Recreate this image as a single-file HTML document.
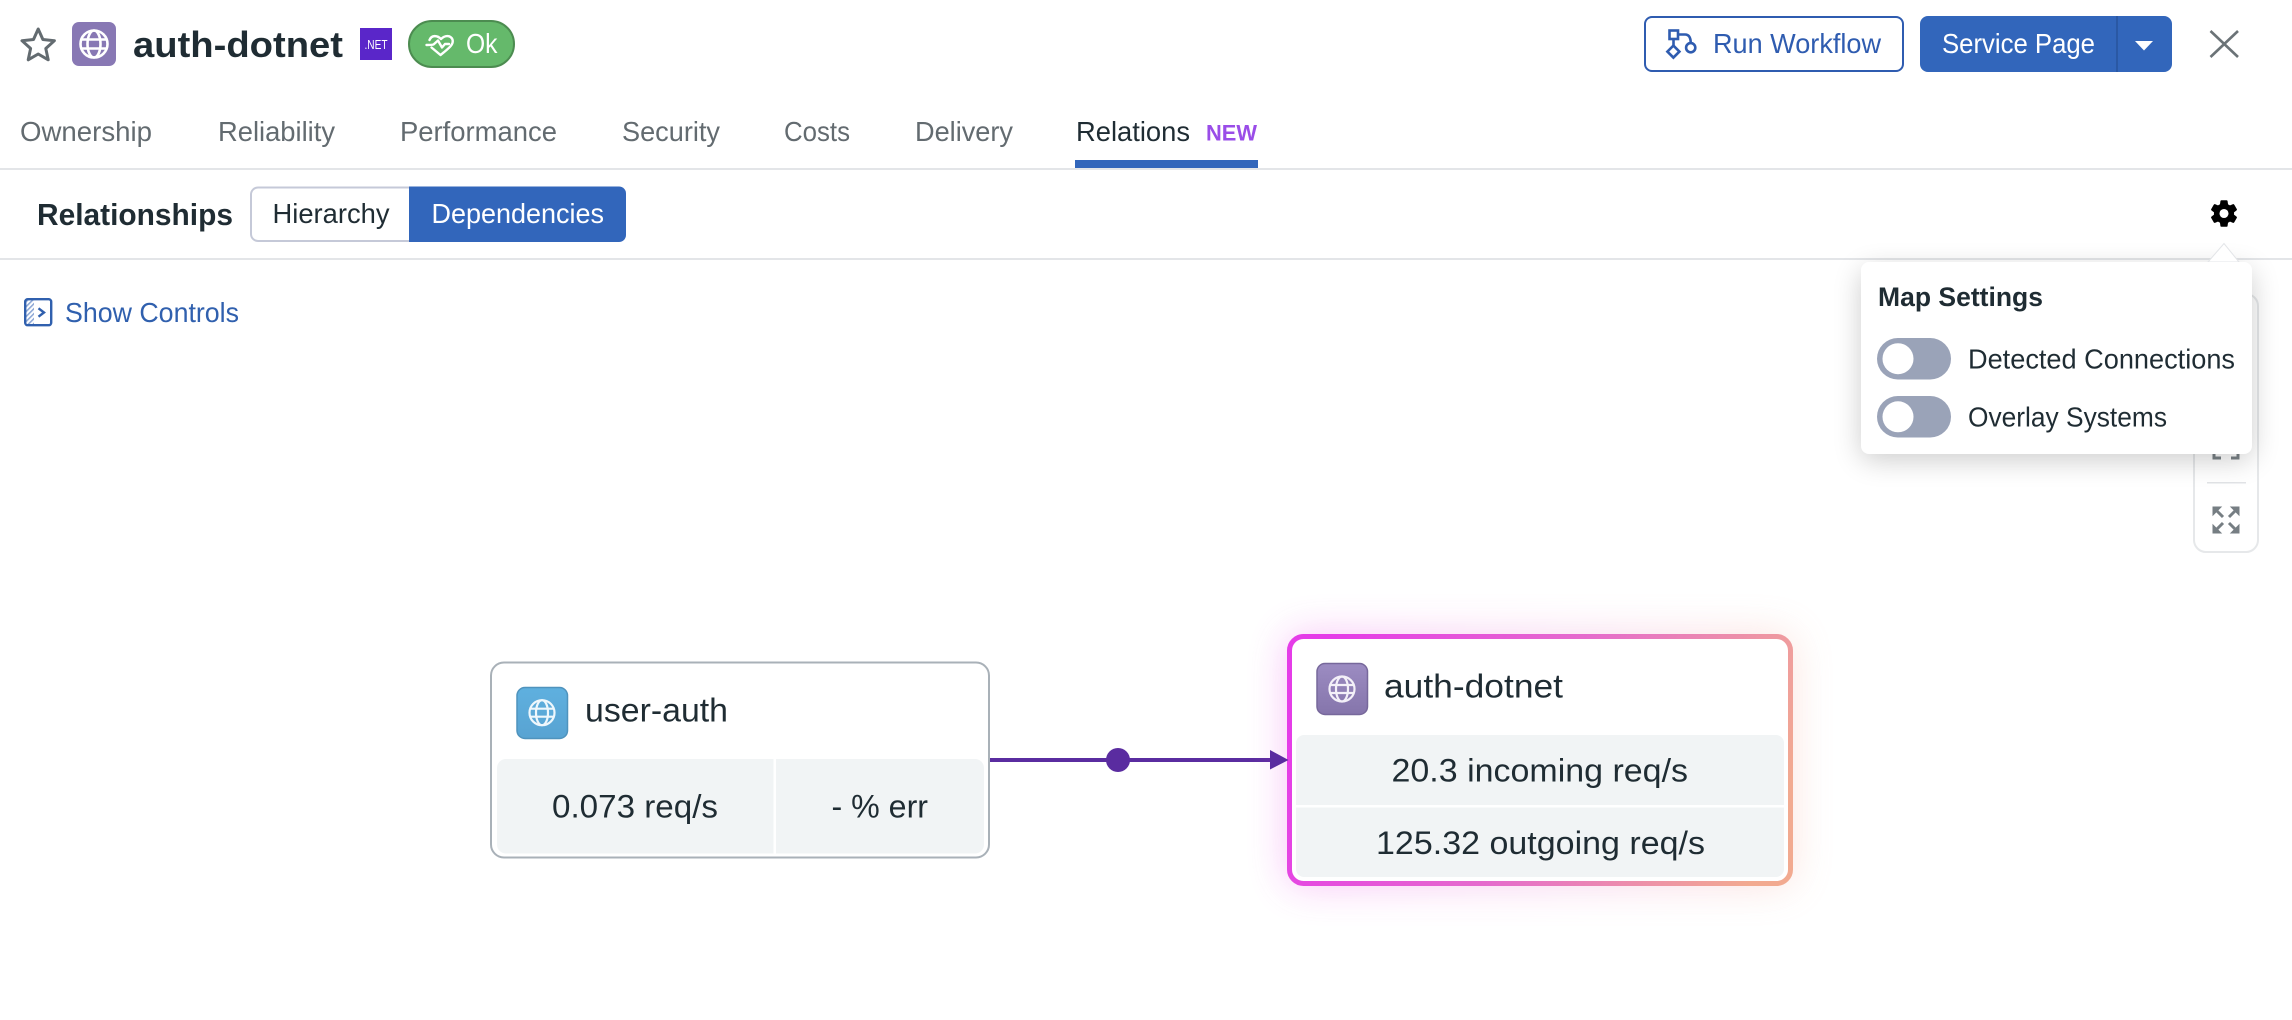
<!DOCTYPE html>
<html lang="en">
<head>
<meta charset="utf-8">
<title>auth-dotnet</title>
<style>
html,body{margin:0;padding:0;background:#fff;width:2292px;height:1020px;overflow:hidden}
svg{display:block}
text{font-family:"Liberation Sans","Noto Sans CJK JP",sans-serif;fill:#1f2c33;font-size:28px}
.b{font-weight:700}
.tab{fill:#636b70}
.w{fill:#fff}
.blue{fill:#3060ae}
</style>
</head>
<body>
<svg xmlns="http://www.w3.org/2000/svg" width="2292" height="1020" viewBox="0 0 2292 1020">
<defs>
<linearGradient id="bord" x1="0" y1="0.4" x2="1" y2="0.6">
<stop offset="0" stop-color="#e53ce8"/><stop offset=".5" stop-color="#e56ccc"/><stop offset="1" stop-color="#f2aa90"/>
</linearGradient>
<linearGradient id="glow" x1="0" y1="0" x2="1" y2="0">
<stop offset="0" stop-color="#e83ce8"/><stop offset=".55" stop-color="#e878c8"/><stop offset="1" stop-color="#f2aa90"/>
</linearGradient>
<linearGradient id="ic1" x1="0" y1="0" x2="0" y2="1"><stop offset="0" stop-color="#5fb0df"/><stop offset="1" stop-color="#58a3d2"/></linearGradient>
<linearGradient id="ic2" x1="0" y1="0" x2="0" y2="1"><stop offset="0" stop-color="#9c8cc2"/><stop offset="1" stop-color="#8575ab"/></linearGradient>
<filter id="blur12" filterUnits="userSpaceOnUse" x="1160" y="510" width="760" height="500"><feGaussianBlur stdDeviation="20"/></filter>
<filter id="blurpop" filterUnits="userSpaceOnUse" x="1780" y="190" width="512" height="350"><feGaussianBlur stdDeviation="14"/></filter>
<pattern id="hatch" width="3.500" height="3.500" patternUnits="userSpaceOnUse" patternTransform="rotate(45)"><rect width="1.600" height="3.500" fill="#8fa9d6"/></pattern>
</defs>

<rect width="2292" height="1020" fill="#fff"/>

<!-- Header -->
<path d="M38.2 29 L42.9 39.5 L54.4 40.7 L45.8 48.5 L48.2 59.8 L38.2 54 L28.2 59.8 L30.6 48.5 L22 40.7 L33.5 39.5 Z" fill="none" stroke="#636b70" stroke-width="3" stroke-linejoin="round"/>
<rect x="72" y="22" width="44" height="44" rx="7" fill="#8878b4"/>
<g fill="none" stroke="#fff" stroke-width="2.6" transform="translate(94 44)">
<circle r="13.5"/><ellipse rx="6.5" ry="13.5"/><path d="M-12.4 -4.5H12.4M-12.4 4.5H12.4"/>
</g>
<text x="133" y="57" class="b" style="font-size:36px" textLength="210" lengthAdjust="spacingAndGlyphs">auth-dotnet</text>
<rect x="360" y="28" width="32" height="32" fill="#5a26c9"/>
<text x="364.500" y="49" class="w" style="font-size:13px" textLength="23" lengthAdjust="spacingAndGlyphs">.NET</text>
<rect x="409" y="21" width="105" height="46" rx="23" fill="#65b96b" stroke="#4c8c50" stroke-width="2"/>
<g fill="none" stroke="#fff" stroke-width="2.400" stroke-linejoin="round" stroke-linecap="round">
<path d="M429.500 40 C431.500 35 437 35 441 39 C445 35 450.500 35 452.500 39.500 C454 44 450 47.500 440.500 55 L431.500 47.500"/>
<path d="M426.500 45 C430 45 431.500 45 433.500 44.500 L438 40.500 L442 47.500 L445 44 H449"/>
</g>
<text x="466" y="53" class="w" style="font-weight:400" textLength="31.500" lengthAdjust="spacingAndGlyphs">Ok</text>

<rect x="1645" y="17" width="258" height="54" rx="7" fill="#fff" stroke="#2f5cb0" stroke-width="2"/>
<g fill="none" stroke="#2f5cb0" stroke-width="2.600">
<rect x="1669.500" y="30.500" width="8.500" height="8.500"/>
<path d="M1678 34.500H1685Q1690.700 34.500 1690.700 43"/>
<circle cx="1690.700" cy="47.700" r="4.600"/>
<path d="M1673.500 39V45.500"/>
<path d="M1673.400 45.600L1679.400 51.600L1673.400 57.600L1667.400 51.600Z"/>
</g>
<text x="1713" y="53" style="fill:#2f5cb0" textLength="168" lengthAdjust="spacingAndGlyphs">Run Workflow</text>

<rect x="1920" y="16" width="252" height="56" rx="8" fill="#3266bb"/>
<rect x="2116" y="16" width="2" height="56" fill="#2a58a4"/>
<text x="1942" y="53" class="w" textLength="153" lengthAdjust="spacingAndGlyphs">Service Page</text>
<path d="M2135 41H2153L2144 50.500Z" fill="#fff"/>
<path d="M2210.500 31L2238 57M2238 31L2210.500 57" stroke="#6b7377" stroke-width="2.600" fill="none"/>

<!-- Tabs -->
<text x="20" y="141" class="tab" textLength="132" lengthAdjust="spacingAndGlyphs">Ownership</text>
<text x="218" y="141" class="tab" textLength="117" lengthAdjust="spacingAndGlyphs">Reliability</text>
<text x="400" y="141" class="tab" textLength="157" lengthAdjust="spacingAndGlyphs">Performance</text>
<text x="622" y="141" class="tab" textLength="98" lengthAdjust="spacingAndGlyphs">Security</text>
<text x="784" y="141" class="tab" textLength="66" lengthAdjust="spacingAndGlyphs">Costs</text>
<text x="915" y="141" class="tab" textLength="98" lengthAdjust="spacingAndGlyphs">Delivery</text>
<text x="1076" y="141" textLength="114" lengthAdjust="spacingAndGlyphs">Relations</text>
<text x="1206" y="140.500" class="b" style="fill:#9a4de8;font-size:22px" textLength="51" lengthAdjust="spacingAndGlyphs">NEW</text>
<rect x="1075" y="160" width="183" height="8" fill="#3266bb"/>
<rect x="0" y="168" width="2292" height="2" fill="#e3e5e8"/>

<!-- Toolbar -->
<text x="37" y="225" class="b" style="font-size:31px" textLength="196" lengthAdjust="spacingAndGlyphs">Relationships</text>
<path d="M409 187.500H258a7 7 0 0 0-7 7V234a7 7 0 0 0 7 7H409" fill="#fff" stroke="#c5c9d8" stroke-width="2"/>
<text x="272.500" y="223" textLength="117" lengthAdjust="spacingAndGlyphs">Hierarchy</text>
<path d="M409 186.500H619a7 7 0 0 1 7 7V235a7 7 0 0 1-7 7H409Z" fill="#3266bb"/>
<text x="431.500" y="223" class="w" textLength="172.500" lengthAdjust="spacingAndGlyphs">Dependencies</text>
<path fill-rule="evenodd" transform="translate(2207.800 197.300) scale(1.350)" stroke="#000" stroke-width=".5" d="M19.14 12.94c.04-.3.06-.61.06-.94 0-.32-.02-.64-.07-.94l2.03-1.58c.18-.14.23-.41.12-.61l-1.92-3.32c-.12-.22-.37-.29-.59-.22l-2.39.96c-.5-.38-1.03-.7-1.62-.94l-.36-2.54c-.04-.24-.24-.41-.48-.41h-3.84c-.24 0-.43.17-.47.41l-.36 2.54c-.59.24-1.13.57-1.62.94l-2.39-.96c-.22-.08-.47 0-.59.22L2.74 8.87c-.12.21-.08.47.12.61l2.03 1.58c-.05.3-.09.63-.09.94s.02.64.07.94l-2.03 1.58c-.18.14-.23.41-.12.61l1.92 3.32c.12.22.37.29.59.22l2.39-.96c.5.38 1.03.7 1.62.94l.36 2.54c.05.24.24.41.48.41h3.84c.24 0 .44-.17.47-.41l.36-2.54c.59-.24 1.13-.56 1.62-.94l2.39.96c.22.08.47 0 .59-.22l1.92-3.32c.12-.22.07-.47-.12-.61l-2.01-1.58zM12 15.6c-1.98 0-3.6-1.62-3.6-3.6s1.62-3.6 3.6-3.6 3.6 1.62 3.6 3.6-1.62 3.6-3.6 3.6z" fill="#000"/>
<rect x="0" y="258" width="2292" height="2" fill="#e3e5e8"/>

<!-- Show controls -->
<rect x="26" y="300" width="8" height="24" fill="url(#hatch)"/>
<rect x="25.200" y="299.200" width="26" height="26" rx="2.500" fill="none" stroke="#3060ae" stroke-width="2.400"/>
<path d="M38.500 308.300L44 312.500L38.500 316.700" fill="none" stroke="#3060ae" stroke-width="2.400"/>
<text x="65" y="322" class="blue" textLength="174" lengthAdjust="spacingAndGlyphs">Show Controls</text>

<!-- Side control panel -->
<rect x="2194" y="294" width="64" height="258" rx="12" fill="#fff" stroke="#e6e8ea" stroke-width="2"/>
<rect x="2207" y="482" width="39" height="1.500" fill="#e1e3e6"/>
<path d="M2214 450V458H2221M2238 450V458H2231" fill="none" stroke="#7a8287" stroke-width="3"/>
<g fill="#767e83" stroke="#767e83">
<path d="M2213 507H2221L2213 515Z"/><path d="M2216 510L2223 517" stroke-width="3"/>
<path d="M2239 507H2231L2239 515Z"/><path d="M2236 510L2229 517" stroke-width="3"/>
<path d="M2213 533H2221L2213 525Z"/><path d="M2216 530L2223 523" stroke-width="3"/>
<path d="M2239 533H2231L2239 525Z"/><path d="M2236 530L2229 523" stroke-width="3"/>
</g>

<!-- Popover -->
<rect x="1861" y="270" width="391" height="190" rx="10" fill="#000" opacity=".2" filter="url(#blurpop)"/>
<path d="M2208 262L2224 243.500L2239 262Z" fill="#fff" stroke="#e3e5e8" stroke-width="1"/>
<rect x="1861" y="262" width="391" height="192" rx="8" fill="#fff"/>
<text x="1878" y="306" class="b" style="font-size:27px" textLength="165" lengthAdjust="spacingAndGlyphs">Map Settings</text>
<rect x="1877" y="338" width="74" height="41.500" rx="20.750" fill="#9aa3b8"/>
<circle cx="1898" cy="358.700" r="15.500" fill="#fff"/>
<text x="1968" y="368.300" textLength="267" lengthAdjust="spacingAndGlyphs">Detected Connections</text>
<rect x="1877" y="396" width="74" height="41.500" rx="20.750" fill="#9aa3b8"/>
<circle cx="1898" cy="416.800" r="15.500" fill="#fff"/>
<text x="1968" y="426.700" textLength="199" lengthAdjust="spacingAndGlyphs">Overlay Systems</text>

<!-- Edge -->
<rect x="988" y="758" width="286" height="4" fill="#5a2ca0"/>
<circle cx="1118" cy="760" r="12" fill="#5a2ca0"/>

<!-- user-auth node -->
<rect x="491" y="662.500" width="498" height="195" rx="13" fill="#fff" stroke="#a9b1b8" stroke-width="2"/>
<rect x="517" y="687.500" width="50.500" height="51" rx="8" fill="url(#ic1)" stroke="#4f93bd" stroke-width="1.500"/>
<g fill="none" stroke="#eef7fc" stroke-width="2.200" transform="translate(542 712.700)">
<circle r="12.500"/><ellipse rx="6" ry="12.500"/><path d="M-11.500 -4H11.500M-11.500 4H11.500"/>
</g>
<text x="585" y="721.700" style="font-size:33px" textLength="143" lengthAdjust="spacingAndGlyphs">user-auth</text>
<rect x="497" y="759" width="487" height="94.500" rx="9" fill="#f1f4f5"/>
<rect x="773.500" y="759" width="2.500" height="94.500" fill="#fff"/>
<text x="552" y="817.700" style="font-size:32px" textLength="166" lengthAdjust="spacingAndGlyphs">0.073 req/s</text>
<text x="831.500" y="817.700" style="font-size:32px" textLength="96.500" lengthAdjust="spacingAndGlyphs">- % err</text>

<!-- auth-dotnet node -->
<rect x="1287" y="634" width="506" height="252" rx="16" fill="url(#glow)" opacity=".3" filter="url(#blur12)"/>
<rect x="1289.500" y="636.500" width="501" height="247" rx="14" fill="#fff" stroke="url(#bord)" stroke-width="5"/>
<path d="M1270 750L1288.500 760L1270 769.500Z" fill="#5a2ca0"/>
<rect x="1317" y="663.500" width="50.500" height="51" rx="8" fill="url(#ic2)" stroke="#77689b" stroke-width="1.500"/>
<g fill="none" stroke="#f3f0f8" stroke-width="2.200" transform="translate(1342 689)">
<circle r="12.500"/><ellipse rx="6" ry="12.500"/><path d="M-11.500 -4H11.500M-11.500 4H11.500"/>
</g>
<text x="1384" y="697.300" style="font-size:33px" textLength="179" lengthAdjust="spacingAndGlyphs">auth-dotnet</text>
<path d="M1296 805V743a8 8 0 0 1 8-8H1776a8 8 0 0 1 8 8V805Z" fill="#f1f4f5"/>
<path d="M1296 807.500H1784V869a8 8 0 0 1-8 8H1304a8 8 0 0 1-8-8Z" fill="#f1f4f5"/>
<text x="1391.500" y="781.700" style="font-size:32px" textLength="296.500" lengthAdjust="spacingAndGlyphs">20.3 incoming req/s</text>
<text x="1376" y="854" style="font-size:32px" textLength="329" lengthAdjust="spacingAndGlyphs">125.32 outgoing req/s</text>
</svg>
</body>
</html>
